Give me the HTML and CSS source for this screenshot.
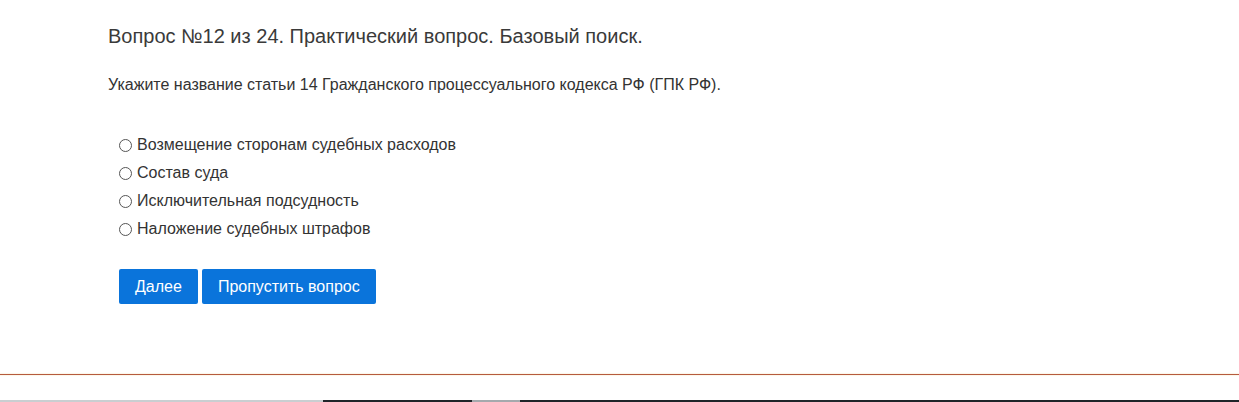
FILE: index.html
```html
<!DOCTYPE html>
<html lang="ru">
<head>
<meta charset="utf-8">
<title>Тест</title>
<link rel="stylesheet" href="styles.css">
</head>
<body>
<main class="quiz">
  <h1 class="quiz-title">Вопрос №12 из 24. Практический вопрос. Базовый поиск.</h1>
  <p class="quiz-text">Укажите название статьи 14 Гражданского процессуального кодекса РФ (ГПК РФ).</p>
  <form class="quiz-form">
    <ul class="options">
      <li><label class="option"><input type="radio" name="answer" value="1"><span>Возмещение сторонам судебных расходов</span></label></li>
      <li><label class="option"><input type="radio" name="answer" value="2"><span>Состав суда</span></label></li>
      <li><label class="option"><input type="radio" name="answer" value="3"><span>Исключительная подсудность</span></label></li>
      <li><label class="option"><input type="radio" name="answer" value="4"><span>Наложение судебных штрафов</span></label></li>
    </ul>
    <div class="actions">
      <button type="button" class="btn">Далее</button>
      <button type="button" class="btn">Пропустить вопрос</button>
    </div>
  </form>
</main>
<footer class="page-footer">
  <div class="footer-rule"></div>
  <div class="scroll-strip">
    <span class="seg seg-light"></span>
    <span class="seg seg-dark seg-a"></span>
    <span class="seg seg-mid"></span>
    <span class="seg seg-dark seg-b"></span>
  </div>
</footer>
</body>
</html>
```

FILE: styles.css
```css
html, body {
  margin: 0;
  padding: 0;
  background: #fff;
}

body {
  font-family: "Liberation Sans", Arial, sans-serif;
  color: #333;
  height: 402px;
  display: flex;
  flex-direction: column;
}

.quiz {
  padding: 24px 0 0 108px;
  flex: 1;
}

.quiz-title {
  margin: 0;
  font-size: 20px;
  font-weight: normal;
  line-height: 24px;
  color: #3a3a3a;
}

.quiz-text {
  margin: 28px 0 0;
  font-size: 16px;
  line-height: 18px;
  color: #333;
}

.quiz-form {
  margin: 42px 0 0 11px;
}

.options {
  list-style: none;
  margin: 0;
  padding: 0;
}

.options li {
  height: 28px;
}

.option {
  display: flex;
  align-items: center;
  font-size: 16px;
  line-height: 18px;
  color: #333;
  cursor: pointer;
}

.option input {
  appearance: none;
  -webkit-appearance: none;
  width: 13px;
  height: 13px;
  margin: 0 5px 0 0;
  border: 1px solid #555;
  border-radius: 50%;
  background: #fff;
  flex: none;
}

.actions {
  display: flex;
  gap: 4px;
  margin-top: 21px;
}

.btn {
  font-family: inherit;
  font-size: 16px;
  color: #fff;
  background: #0a74db;
  border: 0;
  border-radius: 2px;
  height: 35px;
  padding: 0 16px;
  cursor: pointer;
}

.page-footer {
  flex: none;
}

.footer-rule {
  height: 1px;
  background: #b65a3e;
  box-shadow: 0 1px 1px #fbf5e6, 0 -1px 1px #fbf5e6;
  margin-bottom: 25px;
}

.scroll-strip {
  display: flex;
  height: 2px;
}

.seg { display: block; height: 100%; }
.seg-light { width: 323px; background: #c9ced1; }
.seg-dark { background: #1f2529; }
.seg-a { width: 149px; }
.seg-mid { width: 48px; background: #a4a9ad; }
.seg-b { flex: 1; }
```
